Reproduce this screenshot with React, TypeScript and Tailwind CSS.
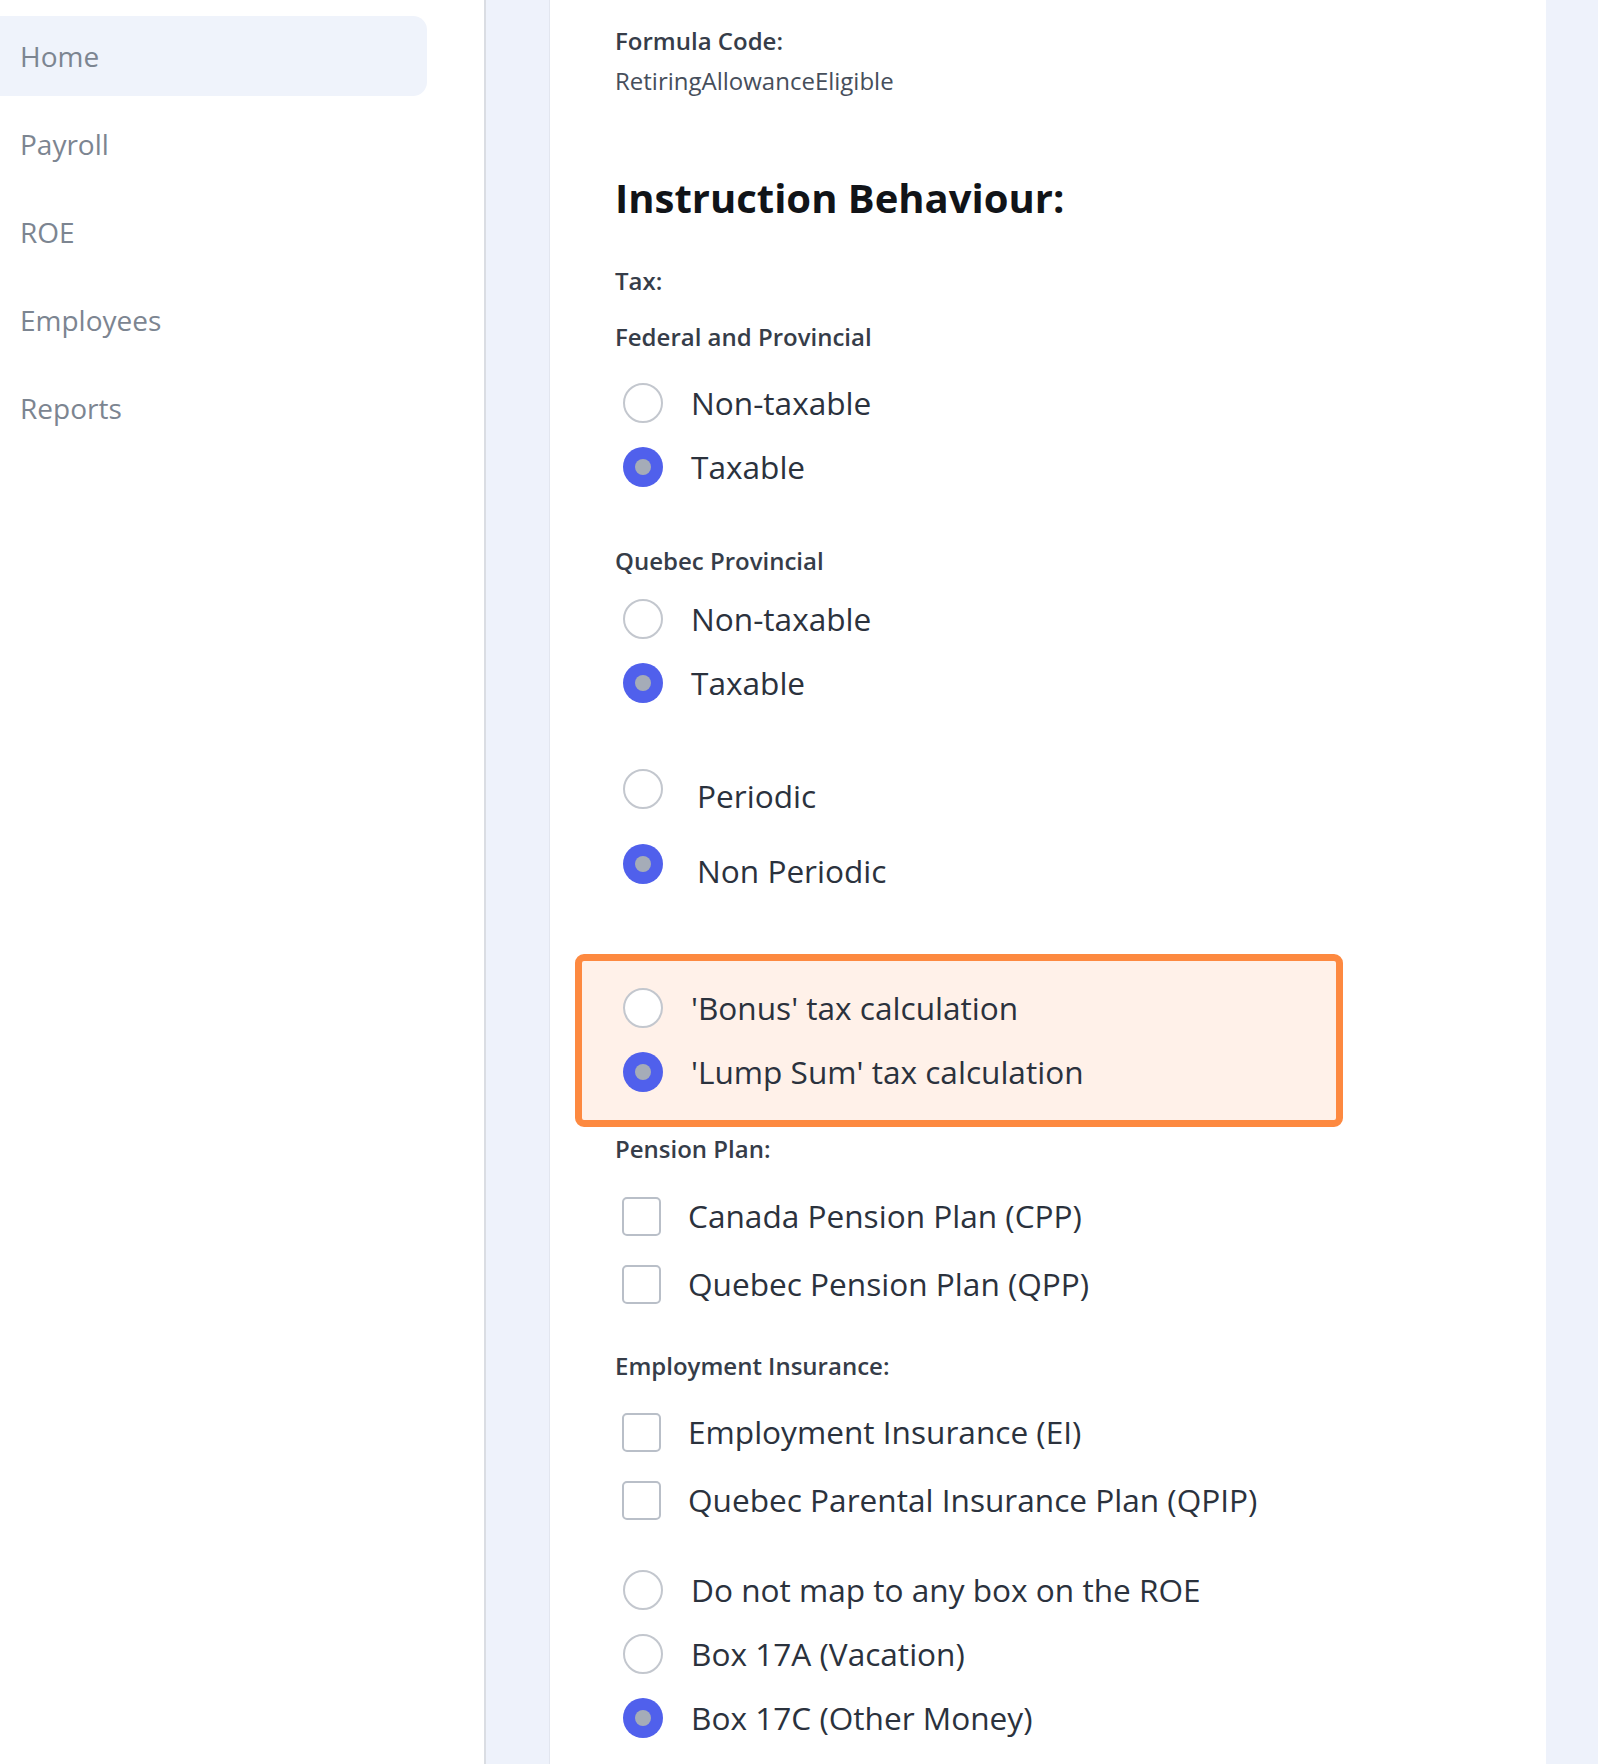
const font = { fontFamily: '"Open Sans", "Noto Sans", sans-serif' };

const nav = ['Home', 'Payroll', 'ROE', 'Employees', 'Reports'];

function Radio({ checked, label, shift }: { checked?: boolean; label: string; shift?: boolean }) {
  return (
    <div className={`flex items-center ${shift ? 'h-[75px]' : 'h-[64px]'}`}>
      {checked ? (
        <span className="flex h-[40px] w-[40px] shrink-0 items-center justify-center rounded-full bg-[#5060ec]">
          <span className="h-[16px] w-[16px] rounded-full bg-[#a5acb8]" />
        </span>
      ) : (
        <span className="h-[40px] w-[40px] shrink-0 rounded-full border-2 border-[#c3c7ce] bg-white" />
      )}
      <span
        className={`text-[31.6px] text-[#2b323d] ${shift ? 'ml-[34px] translate-y-[7px]' : 'ml-[28px]'}`}
      >
        {label}
      </span>
    </div>
  );
}

function Check({ label }: { label: string }) {
  return (
    <div className="flex h-[68px] items-center">
      <span className="h-[39px] w-[39px] shrink-0 rounded-[5px] border-2 border-[#b9bfc8] bg-white" />
      <span className="ml-[27px] text-[31.6px] text-[#2b323d]">{label}</span>
    </div>
  );
}

function Label({ children, className = '' }: { children: React.ReactNode; className?: string }) {
  return (
    <div className={`flex h-[30px] items-center text-[24px] font-semibold text-[#363d49] ${className}`}>
      {children}
    </div>
  );
}

export default function App() {
  return (
    <div className="flex min-h-[1764px] w-full bg-[#eef2fb]" style={font}>
      <aside className="w-[486px] shrink-0 border-r-2 border-[#dadde3] bg-white">
        <nav className="flex flex-col gap-[8px] pt-[16px]">
          {nav.map((n, i) => (
            <div
              key={n}
              className={`flex h-[80px] w-[427px] items-center rounded-r-[14px] pl-[20px] text-[28px] text-[#7c8591] ${
                i === 0 ? 'bg-[#eff3fb]' : ''
              }`}
            >
              {n}
            </div>
          ))}
        </nav>
      </aside>

      <div className="pl-[63px]">
        <main className="h-full w-[997px] border-l border-[#e2e6ef] bg-white pl-[65px] pt-[26px]">
          <Label>Formula Code:</Label>
          <div className="mt-[10px] flex h-[30px] items-center text-[24px] text-[#464e5b]">
            RetiringAllowanceEligible
          </div>

          <h1 className="mt-[77px] flex h-[50px] items-center text-[40px] font-bold text-[#111418]">
            Instruction Behaviour:
          </h1>

          <Label className="mt-[43px]">Tax:</Label>
          <Label className="mt-[26px]">Federal and Provincial</Label>
          <div className="ml-[8px] mt-[19px]">
            <Radio label="Non-taxable" />
            <Radio checked label="Taxable" />
          </div>

          <Label className="mt-[47px]">Quebec Provincial</Label>
          <div className="ml-[8px] mt-[11px]">
            <Radio label="Non-taxable" />
            <Radio checked label="Taxable" />
          </div>

          <div className="ml-[8px] mt-[36px]">
            <Radio shift label="Periodic" />
            <Radio shift checked label="Non Periodic" />
          </div>

          <div className="-ml-[40px] mt-[53px] w-[768px] rounded-[9px] border-[7px] border-[#fd8940] bg-[#fff1e9] pb-[16px] pl-[41px] pt-[15px]">
            <Radio label="'Bonus' tax calculation" />
            <Radio checked label="'Lump Sum' tax calculation" />
          </div>

          <Label className="mt-[7px]">Pension Plan:</Label>
          <div className="ml-[7px] mt-[18px]">
            <Check label="Canada Pension Plan (CPP)" />
            <Check label="Quebec Pension Plan (QPP)" />
          </div>

          <Label className="mt-[33px]">Employment Insurance:</Label>
          <div className="ml-[7px] mt-[17px]">
            <Check label="Employment Insurance (EI)" />
            <Check label="Quebec Parental Insurance Plan (QPIP)" />
          </div>

          <div className="ml-[8px] mt-[24px]">
            <Radio label="Do not map to any box on the ROE" />
            <Radio label="Box 17A (Vacation)" />
            <Radio checked label="Box 17C (Other Money)" />
          </div>
        </main>
      </div>
    </div>
  );
}
